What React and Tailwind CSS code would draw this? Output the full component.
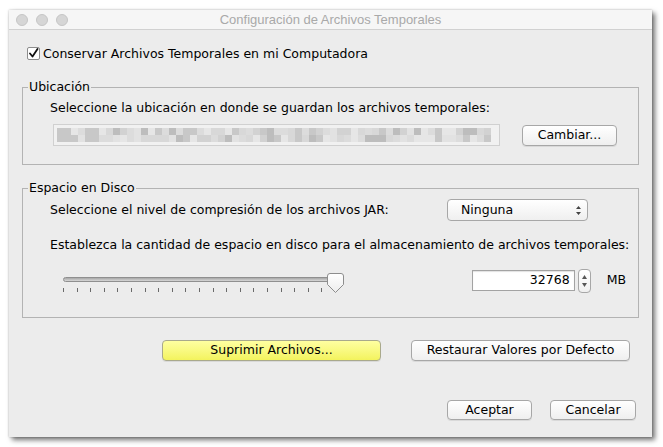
import React from 'react';

const font = { fontFamily: '"DejaVu Sans", "Noto Sans", sans-serif' };

// blurred path in the location field: a fixed mosaic of greys
const mosaic = (() => {
  let seed = 7;
  const next = () => {
    seed = (seed * 9301 + 49297) % 233280;
    return seed / 233280;
  };
  const shades = ['#e6e6e6', '#dcdcdc', '#d2d2d2', '#c8c8c8', '#bdbdbd', '#e2e2e2', '#d8d8d8'];
  return [0, 1].map(() => Array.from({ length: 62 }, () => shades[Math.floor(next() * shades.length)]));
})();

const AquaButton = ({ children, className = '', yellow = false }) => (
  <button
    className={`flex items-center justify-center rounded-[4px] border text-[12.5px] leading-none text-black shadow-[0_1px_0_rgba(0,0,0,0.08)] ${
      yellow
        ? 'border-[#a9a98c] bg-gradient-to-b from-[#ffffa0] to-[#f3f35c]'
        : 'border-[#a7a7a7] bg-gradient-to-b from-white to-[#efefef]'
    } ${className}`}
  >
    {children}
  </button>
);

const Group = ({ title, children, className = '' }) => (
  <fieldset className={`mx-[13px] border border-[#b3b3b3] ${className}`}>
    <legend className="ml-[5px] px-[1px] text-[12.5px] leading-[16px] text-black">{title}</legend>
    {children}
  </fieldset>
);

const Slider = () => {
  const ticks = Array.from({ length: 21 }, (_, i) => i);
  return (
    <div className="relative h-[20px] w-[281px]">
      {/* track */}
      <div className="absolute left-0 right-[2px] top-[4px] h-[5px] rounded-full border border-[#8f8f8f] bg-gradient-to-b from-[#a8a8a8] to-[#d6d6d6]" />
      {/* ticks */}
      {ticks.map((i) => (
        <div key={i} className="absolute top-[15px] h-[4px] w-px bg-[#6a6a6a]" style={{ left: Math.round(i * 13.6) }} />
      ))}
      {/* thumb */}
      <svg className="absolute left-[264px] top-0" width="17" height="20" viewBox="0 0 17 20">
        <defs>
          <linearGradient id="thumb" x1="0" y1="0" x2="0" y2="1">
            <stop offset="0" stopColor="#ffffff" />
            <stop offset="1" stopColor="#ededed" />
          </linearGradient>
        </defs>
        <path d="M3 0.5 H14 Q16.5 0.5 16.5 3 V11.5 L8.5 19.5 L0.5 11.5 V3 Q0.5 0.5 3 0.5 Z" fill="url(#thumb)" stroke="#8d8d8d" />
      </svg>
    </div>
  );
};

const App = () => {
  return (
    <div className="min-h-screen bg-white pl-[9px] pt-[10px]" style={font}>
      <div className="h-[427px] w-[643px] bg-[#ececec] shadow-[3px_3px_5px_rgba(0,0,0,0.55),0_0_2px_rgba(0,0,0,0.25)]">
        {/* Title bar */}
        <div className="grid h-[20px] grid-cols-[1fr_auto_1fr] items-center border-b border-[#d1d1d1] bg-[#f6f6f6]">
          <div className="flex gap-[8px] pl-[7px]">
            <span className="h-[12px] w-[12px] rounded-full border border-[#c6c6c6] bg-[#d6d6d6]" />
            <span className="h-[12px] w-[12px] rounded-full border border-[#c6c6c6] bg-[#d6d6d6]" />
            <span className="h-[12px] w-[12px] rounded-full border border-[#c6c6c6] bg-[#d6d6d6]" />
          </div>
          <div className="text-[13px] text-[#a9a9a9]" style={{ fontFamily: '"Liberation Sans", Arial, sans-serif' }}>
            Configuración de Archivos Temporales
          </div>
          <div />
        </div>

        {/* Keep files */}
        <div className="ml-[18px] mt-[17px] flex h-[13px] items-center">
          <span className="flex h-[13px] w-[13px] items-center justify-center rounded-[2px] border border-[#8c8c8c] bg-white">
            <svg width="11" height="11" viewBox="0 0 11 11">
              <path d="M2 5.5 L4.5 8.5 L9.5 1" fill="none" stroke="#111" strokeWidth="1.8" strokeLinecap="round" strokeLinejoin="round" />
            </svg>
          </span>
          <span className="ml-[3px] text-[12.5px] leading-[16px] text-black">Conservar Archivos Temporales en mi Computadora</span>
        </div>

        {/* Ubicación */}
        <Group title="Ubicación" className="mt-[19px]">
          <div className="pl-[27px] pt-[5px] text-[12.5px] leading-[16px] text-black">
            Seleccione la ubicación en donde se guardan los archivos temporales:
          </div>
          <div className="mt-[8px] flex items-center pb-[18px] pl-[30px]">
            <div className="flex h-[22px] w-[447px] flex-col justify-center border border-[#d0d0d0] bg-[#f1f1f1] px-[3px]">
              {mosaic.map((row, r) => (
                <div key={r} className="flex">
                  {row.map((c, i) => (
                    <div key={i} className="h-[7px] w-[7px]" style={{ backgroundColor: c }} />
                  ))}
                </div>
              ))}
            </div>
            <AquaButton className="ml-[22px] h-[21px] w-[95px]">Cambiar...</AquaButton>
          </div>
        </Group>

        {/* Espacio en Disco */}
        <Group title="Espacio en Disco" className="mt-[15px]">
          <div className="mt-[3px] flex h-[22px] items-center pl-[27px]">
            <span className="text-[12.5px] leading-[16px] text-black">Seleccione el nivel de compresión de los archivos JAR:</span>
            <div className="ml-auto mr-[50px] flex h-[22px] w-[141px] items-center justify-between rounded-[4px] border border-[#a7a7a7] bg-gradient-to-b from-white to-[#efefef] pl-[13px] pr-[5px] text-[12.5px] text-black">
              <span>Ninguna</span>
              <svg width="7" height="11" viewBox="0 0 7 11">
                <path d="M3.5 1 L6 4 H1 Z M3.5 10 L6 7 H1 Z" fill="#444" />
              </svg>
            </div>
          </div>
          <div className="mt-[16px] pl-[27px] text-[12.5px] leading-[16px] text-black">
            Establezca la cantidad de espacio en disco para el almacenamiento de archivos temporales:
          </div>
          <div className="mt-[15px] flex items-center pb-[24px] pl-[40px]">
            <div className="mt-[5px]">
              <Slider />
            </div>
            <div className="ml-auto flex h-[21px] w-[103px] items-center justify-end border border-[#a3a3a3] bg-white pr-[4px] text-[12.5px] text-black shadow-[inset_0_1px_1px_rgba(0,0,0,0.12)]">
              32768
            </div>
            <div className="ml-[3px] flex h-[24px] w-[13px] flex-col items-center justify-center gap-[4px] rounded-[4px] border border-[#a7a7a7] bg-gradient-to-b from-white to-[#efefef]">
              <svg width="5" height="4" viewBox="0 0 5 4"><path d="M2.5 0 L5 4 H0 Z" fill="#555" /></svg>
              <svg width="5" height="4" viewBox="0 0 5 4"><path d="M2.5 4 L5 0 H0 Z" fill="#555" /></svg>
            </div>
            <span className="ml-[16px] mr-[12px] text-[12.5px] text-black">MB</span>
          </div>
        </Group>

        {/* Action buttons */}
        <div className="mt-[22px] flex justify-end gap-[30px] pr-[22px]">
          <AquaButton yellow className="h-[21px] w-[219px]">Suprimir Archivos...</AquaButton>
          <AquaButton className="h-[21px] w-[219px]">Restaurar Valores por Defecto</AquaButton>
        </div>

        <div className="mt-[39px] flex justify-end gap-[18px] pr-[16px]">
          <AquaButton className="h-[20px] w-[85px]">Aceptar</AquaButton>
          <AquaButton className="h-[20px] w-[86px]">Cancelar</AquaButton>
        </div>
      </div>
    </div>
  );
};

export default App;
